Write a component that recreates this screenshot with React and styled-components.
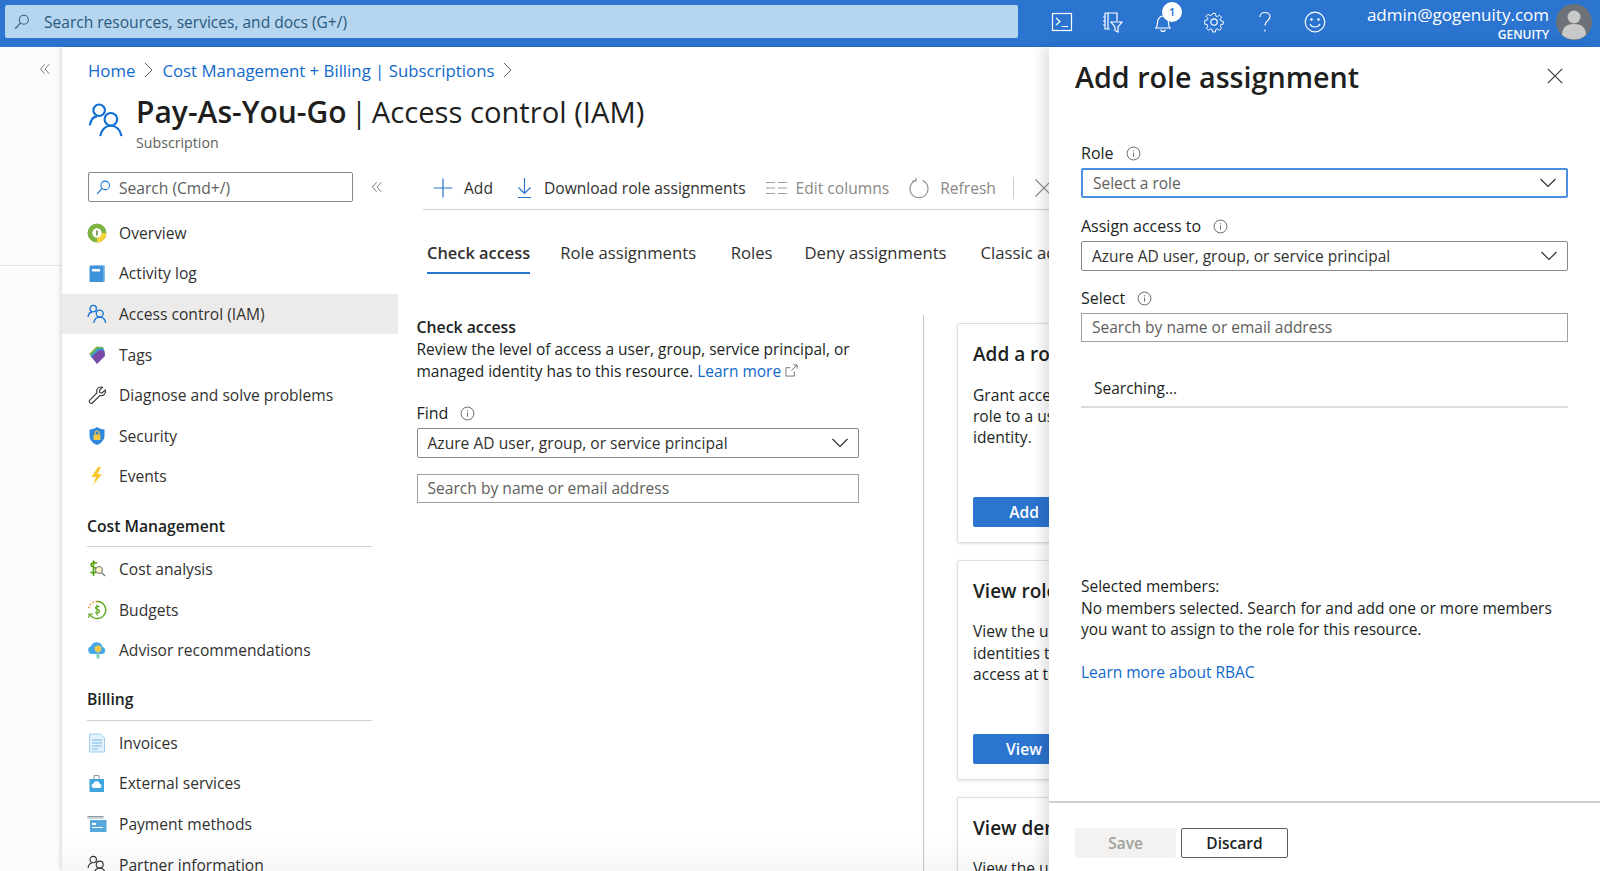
import React from "react";
import styled, { createGlobalStyle } from "styled-components";

const GlobalStyle = createGlobalStyle`
  html, body {
    margin: 0;
    padding: 0;
    background: #fff;
  }
  body {
    font-family: "Open Sans", "Noto Sans", sans-serif;
    color: #201f1e;
    font-size: 15.6px;
  }
  * {
    box-sizing: border-box;
  }
`;

const Svg = ({ size = 20, h, vb = "0 0 20 20", children, ...rest }) => (
  <svg width={size} height={h || size} viewBox={vb} fill="none" style={{ flexShrink: 0 }} {...rest}>
    {children}
  </svg>
);

const SearchGlyph = ({ color, size = 18 }) => (
  <Svg size={size}>
    <circle cx="12" cy="7.5" r="5" stroke={color} strokeWidth="1.2" />
    <path d="M8.4 11 2.5 17.5" stroke={color} strokeWidth="1.3" />
  </Svg>
);

const People = ({ color = "#0f6fd6", size = 20, sw = 1.3 }) => (
  <Svg size={size}>
    <circle cx="6.2" cy="4.6" r="3.2" stroke={color} strokeWidth={sw} />
    <path d="M1 13c.5-3 2-4.8 4-5" stroke={color} strokeWidth={sw} />
    <circle cx="12.7" cy="9.6" r="3.5" stroke={color} strokeWidth={sw} />
    <path d="M6.8 19c.5-3.6 3-5.8 5.9-5.8s5.4 2.2 5.9 5.8" stroke={color} strokeWidth={sw} />
  </Svg>
);

const Info = () => (
  <Svg size={15}>
    <circle cx="10" cy="10" r="8.6" stroke="#605e5c" strokeWidth="1.2" />
    <path d="M10 8.8v5.4M10 5.6v1.5" stroke="#605e5c" strokeWidth="1.2" />
  </Svg>
);

const Chevron = () => (
  <Svg size={18} h={12} vb="0 0 18 12">
    <path d="M1.5 2 9 9.5 16.5 2" stroke="#323130" strokeWidth="1.2" />
  </Svg>
);

const Collapse = () => (
  <Svg size={12}>
    <path d="M9.5 2 2.5 10l7 8M17 2l-7 8 7 8" stroke="#605e5c" strokeWidth="1.3" />
  </Svg>
);

const Crumb = () => (
  <Svg size={9} h={16} vb="0 0 9 16">
    <path d="M1 1l7 7-7 7" stroke="#605e5c" strokeWidth="1" />
  </Svg>
);

// colourful blade menu icons
const icons = {
  overview: (
    <Svg>
      <circle cx="10" cy="10" r="7" stroke="#7cb342" strokeWidth="5" />
      <path d="M10 17a7 7 0 0 0 7-7" stroke="#f7d33c" strokeWidth="5" />
      <circle cx="10" cy="10" r="4.5" fill="#fff" />
      <path d="M10 7.5v5" stroke="#55712c" strokeWidth="1.4" />
    </Svg>
  ),
  book: (
    <Svg>
      <rect x="3" y="2" width="15" height="17" rx="1" fill="#8cc0ea" />
      <rect x="2.5" y="3" width="14" height="16" rx="1" fill="#3d93dc" />
      <rect x="5" y="6" width="8" height="2.5" fill="#fff" />
    </Svg>
  ),
  access: <People />,
  tags: (
    <Svg>
      <path d="M2 9 9.5 1.5l6.5.5.5 3L8 13z" fill="#76b644" />
      <path d="M3 11 11 3l6 .5.5 5.5L10 17z" fill="#3d9ad1" />
      <path d="M4.5 12 12.5 5l5 1 .5 5-8 8z" fill="#7b4aa8" />
    </Svg>
  ),
  wrench: (
    <Svg>
      <path
        d="M2.5 15.3 10 7.8c-.7-2.2 0-4.2 1.7-5.2 1.2-.7 2.7-.8 3.8-.3l-3 3 .4 2.3 2.3.4 3-3c.5 1.2.3 2.7-.4 3.8-1.1 1.7-3 2.3-5 1.7l-7.5 7.5c-1.5 1.3-3.9-.9-2.8-2.7z"
        stroke="#323130"
        strokeWidth="1.1"
      />
    </Svg>
  ),
  shield: (
    <Svg>
      <path d="M10 1c2 1.5 4.5 2.4 7.5 2.5v6c0 4.5-3.2 7.8-7.5 9.5-4.3-1.7-7.5-5-7.5-9.500v-6C5.500 3.400 8 2.500 10 1z" fill="#2f86dc" />
      <rect x="6.5" y="8.5" width="7" height="5.5" rx=".5" fill="#f6c944" />
      <path d="M8 8.5V7a2 2 0 0 1 4 0v1.5" stroke="#f6c944" strokeWidth="1.2" />
    </Svg>
  ),
  bolt: (
    <Svg>
      <path d="M11 1 4.5 11H9l-3 8 9-11h-4.5L14 1z" fill="#f7c52e" />
    </Svg>
  ),
  cost: (
    <Svg>
      <path d="M10 4.5C8 3 4 3.5 4 6s6 2 6 5-4.5 3.500-6.500 2M6.500 1.500V17" stroke="#5ea51e" strokeWidth="1.7" />
      <circle cx="12" cy="11" r="3.5" stroke="#69797e" strokeWidth="1" fill="#fdf3c5" />
      <path d="M14.5 13.5 18 17" stroke="#69797e" strokeWidth="1.2" />
    </Svg>
  ),
  budget: (
    <Svg>
      <path d="M10 1.5a8.5 8.5 0 1 1-7 13" stroke="#5ea51e" strokeWidth="1.4" />
      <path d="M10 1.5a8.5 8.5 0 0 0-8.5 8.5" stroke="#ee8b2d" strokeWidth="1.6" strokeDasharray="1.5 1.8" />
      <path d="M2 18v-4h4" stroke="#5ea51e" strokeWidth="1.2" />
      <path d="M12.5 7c-1-1-4-1-4 .8s4 1.3 4 3.4-3 1.8-4.5 1M10 4.5v11" stroke="#5ea51e" strokeWidth="1.2" />
    </Svg>
  ),
  advisor: (
    <Svg>
      <path d="M5 14a4 4 0 0 1-1-7.8A6 6 0 0 1 15.5 7 3.6 3.6 0 0 1 15.5 14z" fill="#45a9e6" />
      <circle cx="11" cy="8.8" r="3.3" fill="#f6c944" />
      <path d="M9.5 12.5V19l1.500-1 1.500 1v-6.500z" fill="#7fd0c0" />
    </Svg>
  ),
  invoice: (
    <Svg>
      <path d="M2.5 1h11l4 4v14h-15z" fill="#e3f1fb" stroke="#9fcdee" strokeWidth="1" />
      <path d="M5 7h10M5 10h10M5 13h10M5 16h6" stroke="#7db9e8" strokeWidth="1" />
    </Svg>
  ),
  bag: (
    <Svg>
      <path d="M2.5 6H17v13H2.5z" fill="#3ea6dc" />
      <path d="M7 6V2.5h5V6" stroke="#8c9aa3" strokeWidth="1" />
      <path d="M6.5 15a2.3 2.3 0 0 1-.2-4.5 3.5 3.5 0 0 1 6.7.6A2 2 0 0 1 13 15z" fill="#fff" />
    </Svg>
  ),
  card: (
    <Svg>
      <rect x="0.5" y="2" width="16" height="1.5" fill="#8c9aa3" />
      <rect x="0.5" y="3" width="16" height="2" fill="#c8d3da" />
      <rect x="3" y="6" width="16.5" height="12" fill="#58a7dd" />
      <rect x="5" y="9" width="4" height="2" fill="#fff" />
      <path d="M5 13.5h11" stroke="#fff" strokeWidth="1" />
    </Svg>
  ),
  partner: <People color="#323130" sw={1.1} />,
};

const menuTop = [
  ["overview", "Overview"],
  ["book", "Activity log"],
  ["access", "Access control (IAM)"],
  ["tags", "Tags"],
  ["wrench", "Diagnose and solve problems"],
  ["shield", "Security"],
  ["bolt", "Events"],
];
const menuCost = [
  ["cost", "Cost analysis"],
  ["budget", "Budgets"],
  ["advisor", "Advisor recommendations"],
];
const menuBilling = [
  ["invoice", "Invoices"],
  ["bag", "External services"],
  ["card", "Payment methods"],
  ["partner", "Partner information"],
];

const MenuList = ({ items, active }) =>
  items.map(([icon, label]) => (
    <NavItem key={label} $active={label === active}>
      <NavIcon>{icons[icon]}</NavIcon>
      {label}
    </NavItem>
  ));

const Card = ({ title, children, action }) => (
  <CardBox>
    <CardTitle>{title}</CardTitle>
    <CardText>{children}</CardText>
    <CardButton>{action}</CardButton>
  </CardBox>
);

const App = () => (
  <Page>
    <GlobalStyle />
    <TopBar>
      <GlobalSearch>
        <SearchGlyph color="#3b5f80" />
        <GlobalSearchText>Search resources, services, and docs (G+/)</GlobalSearchText>
      </GlobalSearch>
      <TopIcons>
        <TopIcon>
          <Svg size={22} vb="0 0 22 22">
            <rect x="1.5" y="2.5" width="19" height="17" stroke="#fff" strokeWidth="1.2" />
            <path d="M5 7l4 3.5L5 14M10.5 15.5H17" stroke="#fff" strokeWidth="1.2" />
          </Svg>
        </TopIcon>
        <TopIcon>
          <Svg size={22} vb="0 0 22 22">
            <path d="M3 2h12v8M3 2v16h5M6 2v16M1 6h2M1 10h2M1 14h2" stroke="#fff" strokeWidth="1.2" />
            <path d="M9 11h11l-4 5v5l-3-1.5V16z" stroke="#fff" strokeWidth="1.2" />
          </Svg>
        </TopIcon>
        <TopIcon>
          <Svg size={22} vb="0 0 22 22">
            <path d="M4 17c1-1 1.5-2.5 1.5-5.5S7.5 5 11 5s5.5 3.5 5.5 6.5S17 16 18 17z" stroke="#fff" strokeWidth="1.2" />
            <path d="M9 18.5a2 2 0 0 0 4 0" stroke="#fff" strokeWidth="1.2" />
          </Svg>
          <Badge>1</Badge>
        </TopIcon>
        <TopIcon>
          <Svg size={22} vb="0 0 22 22">
            <path
              d="M9.4 1.5h3.2l.5 2.8 1.6.7 2.4-1.6 2.3 2.3-1.6 2.4.7 1.6 2.8.5v3.2l-2.8.5-.7 1.6 1.6 2.4-2.3 2.3-2.4-1.6-1.6.7-.5 2.8H9.4l-.5-2.8-1.6-.7-2.4 1.6-2.3-2.3 1.6-2.4-.7-1.6-2.8-.5V9.2l2.8-.5.7-1.6L2.1 4.7l2.3-2.3 2.4 1.6 1.6-.7z"
              stroke="#fff"
              strokeWidth="1.1"
              transform="translate(1.1 1.1) scale(.9)"
            />
            <circle cx="11" cy="11" r="3.2" stroke="#fff" strokeWidth="1.2" />
          </Svg>
        </TopIcon>
        <TopIcon>
          <Svg size={22} vb="0 0 22 22">
            <path d="M6 6c0-3 2.3-4.5 5-4.5s5 1.7 5 4.3c0 3.7-5 4.2-5 8.7M11 18.5v2" stroke="#fff" strokeWidth="1.2" />
          </Svg>
        </TopIcon>
        <TopIcon>
          <Svg size={22} vb="0 0 22 22">
            <circle cx="11" cy="11" r="9.8" stroke="#fff" strokeWidth="1.2" />
            <circle cx="7.5" cy="8.5" r="1.2" fill="#fff" />
            <circle cx="14.5" cy="8.5" r="1.2" fill="#fff" />
            <path d="M6 13c1 2 3 3 5 3s4-1 5-3" stroke="#fff" strokeWidth="1.2" />
          </Svg>
        </TopIcon>
      </TopIcons>
      <Account>
        <AccountName>admin@gogenuity.com</AccountName>
        <AccountOrg>GENUITY</AccountOrg>
      </Account>
      <Avatar>
        <Svg size={36} vb="0 0 36 36">
          <circle cx="18" cy="13" r="6.5" fill="#c9c9c9" />
          <path d="M6 31c0-8 5-11 12-11s12 3 12 11a18 18 0 0 1-24 0z" fill="#c9c9c9" />
        </Svg>
      </Avatar>
    </TopBar>

    <Body>
      <LeftRail>
        <RailCollapse>
          <Collapse />
        </RailCollapse>
        <RailLine />
      </LeftRail>

      <Blade>
        <Breadcrumbs>
          <CrumbLink>Home</CrumbLink>
          <Crumb />
          <CrumbLink>Cost Management + Billing | Subscriptions</CrumbLink>
          <Crumb />
        </Breadcrumbs>

        <BladeHeader>
          <HeaderIcon>
            <People size={36} sw={1.2} />
          </HeaderIcon>
          <div>
            <BladeTitle>
              <strong>Pay-As-You-Go</strong> <TitleBar>|</TitleBar> Access control (IAM)
            </BladeTitle>
            <BladeSub>Subscription</BladeSub>
          </div>
        </BladeHeader>

        <BladeBody>
          <Sidebar>
            <SideSearchRow>
              <SideSearch>
                <SearchGlyph color="#0f6fd6" size={17} />
                Search (Cmd+/)
              </SideSearch>
              <Collapse />
            </SideSearchRow>
            <SideNav>
              <MenuList items={menuTop} active="Access control (IAM)" />
              <SectionTitle>Cost Management</SectionTitle>
              <MenuList items={menuCost} />
              <SectionTitle>Billing</SectionTitle>
              <MenuList items={menuBilling} />
            </SideNav>
          </Sidebar>

          <Content>
            <Toolbar>
              <ToolItem $gap={11}>
                <Svg size={20}>
                  <path d="M10 .5v19M.5 10h19" stroke="#2b74cf" strokeWidth="1.2" />
                </Svg>
                Add
              </ToolItem>
              <ToolItem $gap={11} $left={3}>
                <Svg size={17} h={22} vb="0 0 17 22">
                  <path d="M8.5 1v15M2.5 10.5l6 6 6-6M2 20.5h13" stroke="#2b74cf" strokeWidth="1.2" />
                </Svg>
                Download role assignments
              </ToolItem>
              <ToolItem $gap={9} $disabled>
                <Svg size={21} h={14} vb="0 0 21 14">
                  <path d="M0 1.5h9M12 1.5h9M0 7h9M12 7h9M0 12.5h9M12 12.5h9" stroke="#a19f9d" strokeWidth="1.2" />
                </Svg>
                Edit columns
              </ToolItem>
              <ToolItem $disabled>
                <Svg size={21} h={22} vb="0 0 21 22">
                  <path d="M13.5 3.5a9 9 0 1 1-7 0M7 1v3H3.5" stroke="#8a8886" strokeWidth="1.1" />
                </Svg>
                Refresh
              </ToolItem>
              <ToolDivider />
              <Svg size={20}>
                <path d="M1.5 1.5 18.500 18.500M18.500 1.500 1.500 18.500" stroke="#8a8886" strokeWidth="1.1" />
              </Svg>
            </Toolbar>

            <Tabs>
              <Tab $active>Check access</Tab>
              <Tab $left={30}>Role assignments</Tab>
              <Tab $left={34.5}>Roles</Tab>
              <Tab $left={32}>Deny assignments</Tab>
              <Tab $left={34}>Classic administrators</Tab>
            </Tabs>

            <Columns>
              <CheckColumn>
                <CheckHeading>Check access</CheckHeading>
                <Paragraph>
                  Review the level of access a user, group, service principal, or
                  <br />
                  managed identity has to this resource. <Link>Learn more</Link>{" "}
                  <Svg size={13} vb="0 0 14 14">
                    <path d="M10 8v5H1V4h5M7 7l6-6M9 1h4v4" stroke="#605e5c" strokeWidth=".9" />
                  </Svg>
                </Paragraph>
                <FieldLabel $top={20}>
                  Find <Info />
                </FieldLabel>
                <SelectBox>
                  Azure AD user, group, or service principal
                  <Chevron />
                </SelectBox>
                <InputBox $top={16}>Search by name or email address</InputBox>
              </CheckColumn>

              <CardColumn>
                <Card title="Add a role assignment" action="Add">
                  Grant access to this resource by assigning a
                  <br />
                  role to a user, group, service principal, or managed
                  <br />
                  identity.
                </Card>
                <Card title="View role assignments" action="View">
                  View the users, groups, service principals and managed
                  <br />
                  identities that have role assignments granting them
                  <br />
                  access at this scope.
                </Card>
                <Card title="View deny assignments" action="View">
                  View the users, groups, service principals and managed
                </Card>
              </CardColumn>
            </Columns>
          </Content>
        </BladeBody>
      </Blade>

      <BottomFade />

      <SidePanel>
        <PanelHeader>
          <PanelTitle>Add role assignment</PanelTitle>
          <Svg size={16}>
            <path d="M1 1l18 18M19 1 1 19" stroke="#323130" strokeWidth="1.3" />
          </Svg>
        </PanelHeader>
        <PanelForm>
          <FieldLabel $top={0}>
            Role <Info />
          </FieldLabel>
          <SelectBox $focused $muted>
            Select a role
            <Chevron />
          </SelectBox>
          <FieldLabel $top={17}>
            Assign access to <Info />
          </FieldLabel>
          <SelectBox>
            Azure AD user, group, or service principal
            <Chevron />
          </SelectBox>
          <FieldLabel $top={16}>
            Select <Info />
          </FieldLabel>
          <InputBox $top={0}>Search by name or email address</InputBox>
          <Searching>Searching...</Searching>
          <SelectedMembers>
            Selected members:
            <br />
            No members selected. Search for and add one or more members
            <br />
            you want to assign to the role for this resource.
          </SelectedMembers>
          <RbacLink>Learn more about RBAC</RbacLink>
        </PanelForm>
        <PanelFooter>
          <SaveButton>Save</SaveButton>
          <DiscardButton>Discard</DiscardButton>
        </PanelFooter>
      </SidePanel>
    </Body>
  </Page>
);

export default App;

const Page = styled.div`
  width: 1600px;
  height: 871px;
  overflow: hidden;
  display: flex;
  flex-direction: column;
`;

const TopBar = styled.header`
  height: 47px;
  flex-shrink: 0;
  background: #2b74cf;
  padding: 0 8px 4px 5px;
  display: flex;
  align-items: center;
`;

const GlobalSearch = styled.div`
  width: 1013px;
  height: 33px;
  background: #b6d5ee;
  border-radius: 2px;
  display: flex;
  align-items: center;
  padding-left: 8px;
  gap: 13px;
`;

const GlobalSearchText = styled.span`
  font-size: 15.55px;
  color: #28597f;
`;

const TopIcons = styled.div`
  display: flex;
  margin-left: 19px;
`;

const TopIcon = styled.div`
  position: relative;
  width: 50.6px;
  display: flex;
  justify-content: center;
`;

const Badge = styled.span`
  position: absolute;
  top: -9px;
  left: 24px;
  width: 20px;
  height: 20px;
  border-radius: 50%;
  background: #fff;
  color: #2b74cf;
  font-size: 11px;
  font-weight: 600;
  display: flex;
  align-items: center;
  justify-content: center;
`;

const Account = styled.div`
  margin: 5px 7px 0 auto;
  color: #fff;
  text-align: right;
  white-space: nowrap;
`;

const AccountName = styled.div`
  font-size: 17px;
  line-height: 22px;
`;

const AccountOrg = styled.div`
  font-size: 12px;
  line-height: 18px;
  font-weight: 600;
`;

const Avatar = styled.div`
  width: 36px;
  height: 36px;
  border-radius: 50%;
  background: #6c7278;
  overflow: hidden;
`;

const Body = styled.div`
  position: relative;
  flex: 1;
  display: flex;
  min-height: 0;
`;

const LeftRail = styled.aside`
  width: 62px;
  flex-shrink: 0;
  background: #fcfcfc;
`;

const RailCollapse = styled.div`
  height: 36px;
  padding: 11px 0 0 39px;
`;

const RailLine = styled.div`
  height: 1px;
  margin-top: 182px;
  background: #e6e6e6;
`;

const Blade = styled.main`
  width: 987px;
  flex-shrink: 0;
  overflow: hidden;
  background: #fff;
  box-shadow: -2px 0 4px rgba(0, 0, 0, 0.12);
`;

const Breadcrumbs = styled.nav`
  height: 24px;
  margin: 11px 0 0 26px;
  display: flex;
  align-items: center;
  gap: 9px;
`;

const CrumbLink = styled.a`
  font-size: 16.8px;
  color: #1069cc;
`;

const BladeHeader = styled.div`
  display: flex;
  margin: 9px 0 0 26px;
  gap: 12px;
`;

const HeaderIcon = styled.div`
  padding-top: 11px;
`;

const BladeTitle = styled.h1`
  margin: 0;
  font-size: 29.2px;
  line-height: 42px;
  font-weight: 400;
  white-space: nowrap;

  strong {
    font-size: 30px;
    font-weight: 600;
  }
`;

const TitleBar = styled.span`
  margin: 0 -3px 0 -3px;
`;

const BladeSub = styled.div`
  font-size: 14.2px;
  line-height: 20px;
  color: #605e5c;
`;

const BladeBody = styled.div`
  display: flex;
  margin-top: 19px;
`;

const Sidebar = styled.div`
  width: 336px;
  flex-shrink: 0;
`;

const SideSearchRow = styled.div`
  display: flex;
  align-items: center;
  gap: 18px;
  padding-left: 26px;
`;

const SideSearch = styled.div`
  width: 265px;
  height: 30px;
  border: 1px solid #8a8886;
  border-radius: 2px;
  display: flex;
  align-items: center;
  gap: 7px;
  padding: 1px 0 0 6px;
  color: #605e5c;
`;

const SideNav = styled.div`
  margin-top: 10.5px;
`;

const NavItem = styled.div`
  height: 40.6px;
  display: flex;
  align-items: center;
  gap: 12px;
  padding-left: 25px;
  color: #323130;
  background: ${({ $active }) => ($active ? "#edebe9" : "transparent")};
`;

const NavIcon = styled.span`
  display: flex;
  width: 20px;
  height: 20px;
`;

const SectionTitle = styled.div`
  margin: 19px 26px 1.5px 25px;
  padding-bottom: 10.5px;
  border-bottom: 1.5px solid #d2d0ce;
  font-size: 15.7px;
  line-height: 20px;
  font-weight: 600;
`;

const Content = styled.section`
  flex: 1;
  min-width: 0;
  padding-left: 18.5px;
`;

const Toolbar = styled.div`
  height: 38px;
  margin-left: 6.5px;
  padding: 1px 0 7px 10px;
  border-bottom: 1.5px solid #d2d0ce;
  display: flex;
  align-items: center;
  gap: 20px;
`;

const ToolItem = styled.div`
  display: flex;
  align-items: center;
  gap: ${({ $gap }) => $gap || 10}px;
  margin-left: ${({ $left }) => $left || 0}px;
  white-space: nowrap;
  color: ${({ $disabled }) => ($disabled ? "#8a8886" : "#323130")};
`;

const ToolDivider = styled.div`
  width: 1px;
  height: 22px;
  flex-shrink: 0;
  margin-left: -3px;
  background: #d2d0ce;
`;

const Tabs = styled.div`
  display: flex;
  margin: 25px 0 0 10.5px;
  white-space: nowrap;
`;

const Tab = styled.div`
  height: 38.5px;
  padding-top: 6px;
  margin-left: ${({ $left }) => $left || 0}px;
  font-size: ${({ $active }) => ($active ? 16.4 : 16.7)}px;
  color: #323130;
  font-weight: ${({ $active }) => ($active ? 600 : 400)};
  border-bottom: 2.5px solid ${({ $active }) => ($active ? "#2b74cf" : "transparent")};
`;

const Columns = styled.div`
  display: flex;
  margin-top: 41.5px;
`;

const CheckColumn = styled.div`
  width: 506.5px;
  flex-shrink: 0;
  padding: 1px 64.5px 0 0;
`;

const CheckHeading = styled.div`
  font-size: 15.8px;
  line-height: 22px;
  font-weight: 600;
`;

const Paragraph = styled.p`
  margin: 1px 0 0;
  font-size: 15.5px;
  line-height: 21.5px;
  white-space: nowrap;
`;

const Link = styled.a`
  color: #1069cc;
`;

const FieldLabel = styled.div`
  display: flex;
  align-items: center;
  gap: 12px;
  height: 22px;
  margin-top: ${({ $top }) => $top}px;
  margin-bottom: 4px;
  font-size: 16px;
  font-weight: 500;
`;

const SelectBox = styled.div`
  height: 30px;
  display: flex;
  align-items: center;
  justify-content: space-between;
  padding: 0 9px 0 10px;
  color: ${({ $muted }) => ($muted ? "#605e5c" : "#323130")};
  border-radius: 2px;
  border: ${({ $focused }) => ($focused ? "2px solid #4a8fe0" : "1px solid #8a8886")};
`;

const InputBox = styled.div`
  height: 28.5px;
  display: flex;
  align-items: center;
  padding-left: 10px;
  margin-top: ${({ $top }) => $top}px;
  color: #605e5c;
  border: 1px solid #a19f9d;
`;

const CardColumn = styled.div`
  border-left: 1px solid #c8c6c4;
  padding: 8px 0 0 33px;
  display: flex;
  flex-direction: column;
  gap: 16.8px;
  height: 600px;
`;

const CardBox = styled.div`
  width: 380px;
  height: 220px;
  flex-shrink: 0;
  padding: 16px 15px 15px;
  border: 1px solid #e1dfdd;
  border-radius: 2px;
  box-shadow: 0 1px 3px rgba(0, 0, 0, 0.12);
  display: flex;
  flex-direction: column;
`;

const CardTitle = styled.div`
  font-size: 19px;
  line-height: 28px;
  font-weight: 600;
  white-space: nowrap;
`;

const CardText = styled.div`
  margin-top: 16.5px;
  line-height: 21.4px;
  white-space: nowrap;
`;

const CardButton = styled.div`
  margin-top: auto;
  width: 102px;
  height: 30px;
  background: #2b74cf;
  border-radius: 2px;
  color: #fff;
  font-weight: 600;
  display: flex;
  align-items: center;
  justify-content: center;
`;

const BottomFade = styled.div`
  position: absolute;
  left: 62px;
  bottom: 0;
  width: 1300px;
  height: 36px;
  background: linear-gradient(rgba(0, 0, 0, 0), rgba(0, 0, 0, 0.035));
  pointer-events: none;
`;

const SidePanel = styled.aside`
  position: absolute;
  top: 0;
  right: 0;
  bottom: 0;
  width: 551px;
  background: #fff;
  font-size: 15.5px;
  box-shadow: -6px 0 12px rgba(0, 0, 0, 0.13);
  display: flex;
  flex-direction: column;
`;

const PanelHeader = styled.div`
  height: 58px;
  padding: 0 37px 0 26px;
  display: flex;
  align-items: center;
  justify-content: space-between;
`;

const PanelTitle = styled.h2`
  margin: 0;
  font-size: 28.7px;
  font-weight: 600;
`;

const PanelForm = styled.div`
  flex: 1;
  padding: 37px 32px 0 32px;
`;

const Searching = styled.div`
  margin-top: 25.5px;
  height: 41px;
  padding: 10px 0 0 13px;
  border-bottom: 2px solid #dedcda;
`;

const SelectedMembers = styled.div`
  margin-top: 168px;
  line-height: 21.5px;
  white-space: nowrap;
`;

const RbacLink = styled.a`
  display: block;
  margin-top: 20.5px;
  color: #1069cc;
`;

const PanelFooter = styled.div`
  height: 70px;
  border-top: 2px solid #d2d0ce;
  padding: 25px 0 0 26px;
  display: flex;
  gap: 5px;
`;

const SaveButton = styled.div`
  width: 101px;
  height: 30px;
  background: #f3f2f1;
  color: #a19f9d;
  border-radius: 2px;
  font-weight: 600;
  display: flex;
  align-items: center;
  justify-content: center;
`;

const DiscardButton = styled(SaveButton)`
  width: 107px;
  background: #fff;
  color: #201f1e;
  border: 1px solid #605e5c;
`;
